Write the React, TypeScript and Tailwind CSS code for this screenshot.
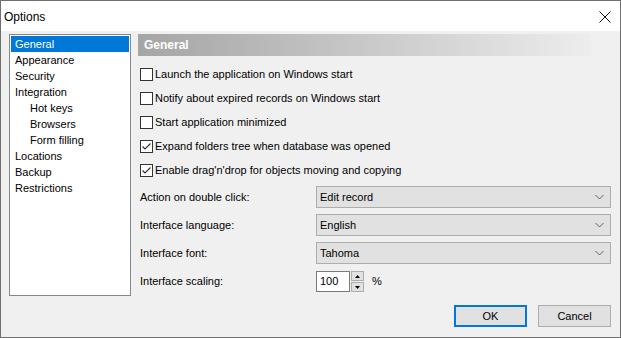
import React from "react";

const treeItems = [
  { label: "General", depth: 0, selected: true },
  { label: "Appearance", depth: 0 },
  { label: "Security", depth: 0 },
  { label: "Integration", depth: 0 },
  { label: "Hot keys", depth: 1 },
  { label: "Browsers", depth: 1 },
  { label: "Form filling", depth: 1 },
  { label: "Locations", depth: 0 },
  { label: "Backup", depth: 0 },
  { label: "Restrictions", depth: 0 },
];

const checks = [
  { label: "Launch the application on Windows start", checked: false },
  { label: "Notify about expired records on Windows start", checked: false },
  { label: "Start application minimized", checked: false },
  { label: "Expand folders tree when database was opened", checked: true },
  { label: "Enable drag'n'drop for objects moving and copying", checked: true },
];

const selects = [
  { label: "Action on double click:", value: "Edit record" },
  { label: "Interface language:", value: "English" },
  { label: "Interface font:", value: "Tahoma" },
];

const CheckBox: React.FC<{ checked: boolean }> = ({ checked }) => (
  <span className="w-[13px] h-[13px] border border-[#333333] bg-white flex items-center justify-center shrink-0">
    {checked && (
      <svg width="11" height="11" viewBox="0 0 11 11">
        <path d="M1.5 5.5 L4 8 L9.5 2.5" fill="none" stroke="#333" strokeWidth="1.2" />
      </svg>
    )}
  </span>
);

const Chevron = () => (
  <svg width="9" height="6" viewBox="0 0 9 6">
    <path d="M0.5 1 L4.5 5 L8.5 1" fill="none" stroke="#606060" strokeWidth="1" />
  </svg>
);

export default function App() {
  return (
    <div
      className="w-[621px] h-[338px] border border-[#707070] flex flex-col text-[11px] text-black"
      style={{ fontFamily: '"Liberation Sans", Arial, sans-serif' }}
    >
      <div className="h-[30px] bg-white flex items-center justify-between pl-[3px] pr-[9px] pt-[1px]">
        <span className="text-[12px]">Options</span>
        <svg width="12" height="12" viewBox="0 0 12 12">
          <path d="M0.5 0.5 L11.5 11.5 M11.5 0.5 L0.5 11.5" stroke="#111" strokeWidth="1" />
        </svg>
      </div>
      <div className="flex-1 bg-[#f0f0f0] flex flex-col pt-[3px] pl-[8px] pr-[9px]">
        <div className="flex gap-[7px]">
          <div className="w-[122px] h-[262px] border border-[#828790] bg-white p-[1px]">
            {treeItems.map((t) => (
              <div
                key={t.label}
                className={`h-[16px] flex items-center ${t.depth ? "pl-[19px]" : "pl-[4px]"} ${
                  t.selected ? "bg-[#0078d7] text-white" : ""
                }`}
              >
                {t.label}
              </div>
            ))}
          </div>
          <div className="flex-1 flex flex-col">
            <div className="w-[453px] h-[22px] bg-gradient-to-r from-[#a5a5a5] to-[#ededed] flex items-center pl-[6px] text-white font-bold text-[12px]">
              General
            </div>
            <div className="mt-[6px] flex flex-col pl-[2px]">
              {checks.map((c) => (
                <div key={c.label} className="h-[24px] flex items-center gap-[2px]">
                  <CheckBox checked={c.checked} />
                  <span>{c.label}</span>
                </div>
              ))}
            </div>
            <div className="mt-[4px] flex flex-col gap-[6px] pl-[2px]">
              {selects.map((s) => (
                <div key={s.label} className="flex items-center h-[22px]">
                  <span className="w-[176px]">{s.label}</span>
                  <div className="flex-1 h-[22px] bg-[#e1e1e1] border border-[#adadad] flex items-center justify-between pl-[3px] pr-[6px]">
                    <span>{s.value}</span>
                    <Chevron />
                  </div>
                </div>
              ))}
              <div className="flex items-center h-[21px] mt-[1px]">
                <span className="w-[176px]">Interface scaling:</span>
                <div className="w-[34px] h-[21px] bg-white border border-[#7a7a7a] flex items-center pl-[3px]">
                  100
                </div>
                <div className="ml-[1px] flex flex-col gap-[1px]">
                  <div className="w-[13px] h-[10px] bg-[#e1e1e1] border border-[#adadad] flex items-center justify-center">
                    <svg width="5" height="3" viewBox="0 0 5 3">
                      <path d="M0 3 L2.5 0 L5 3 Z" fill="#000" />
                    </svg>
                  </div>
                  <div className="w-[13px] h-[10px] bg-[#e1e1e1] border border-[#adadad] flex items-center justify-center">
                    <svg width="5" height="3" viewBox="0 0 5 3">
                      <path d="M0 0 L5 0 L2.5 3 Z" fill="#000" />
                    </svg>
                  </div>
                </div>
                <span className="ml-[8px]">%</span>
              </div>
            </div>
          </div>
        </div>
        <div className="flex justify-end gap-[11px] mt-[9px]">
          <button className="w-[73px] h-[22px] bg-[#e1e1e1] border-2 border-[#0078d7] flex items-center justify-center">
            OK
          </button>
          <button className="w-[73px] h-[22px] bg-[#e1e1e1] border border-[#adadad] flex items-center justify-center">
            Cancel
          </button>
        </div>
      </div>
    </div>
  );
}
